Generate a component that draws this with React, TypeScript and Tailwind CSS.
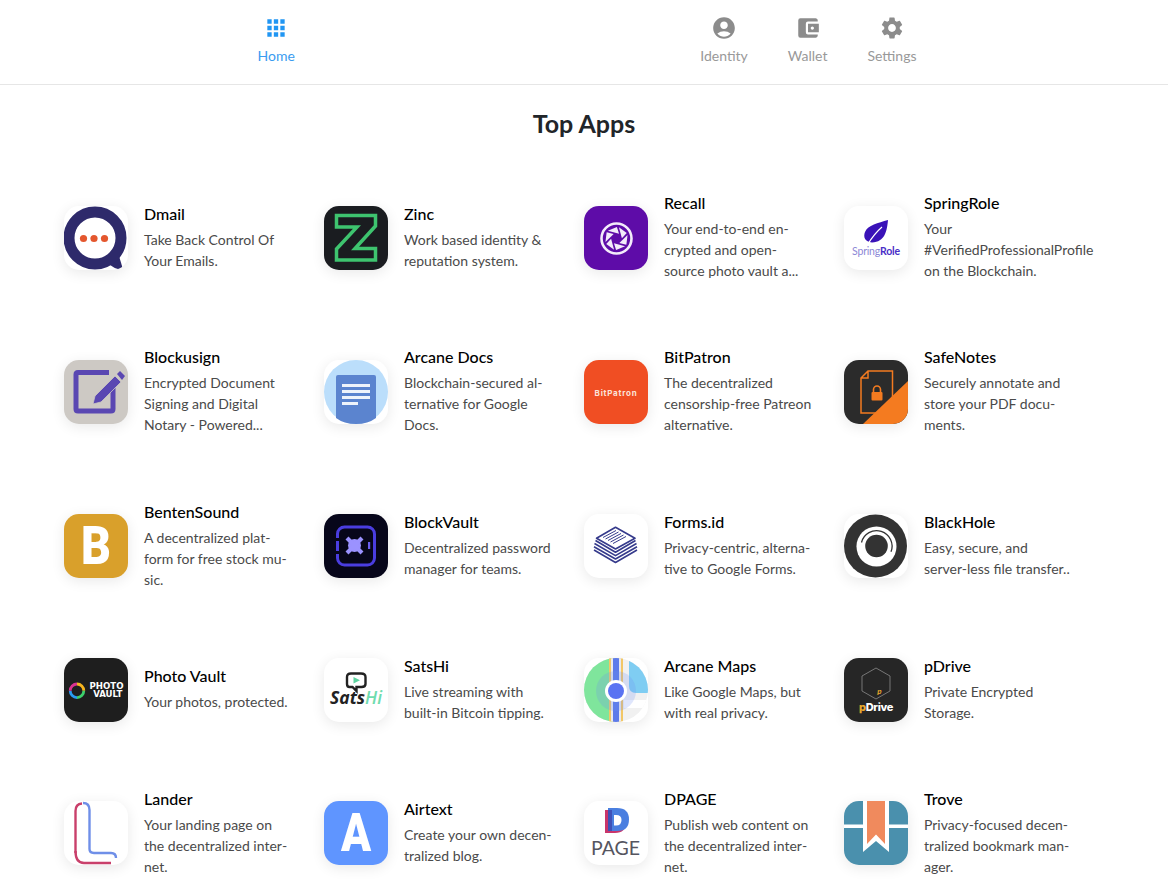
import React from "react";
import { MdApps, MdAccountCircle, MdAccountBalanceWallet, MdSettings } from "react-icons/md";

const S = ({ children, bg = "#ffffff" }: { children: React.ReactNode; bg?: string }) => (
  <div className="w-16 h-16 shrink-0 rounded-[15px] overflow-hidden shadow-[0_3px_14px_rgba(0,0,0,0.09)]" style={{ background: bg }}>
    <svg viewBox="0 0 64 64" width="64" height="64" className="block">{children}</svg>
  </div>
);

const Dmail = () => (
  <S>
    <path d="M48 56 L55 50 L58 60 Q59 64 54 63 Q50 62 46 59 Z" fill="#2e2a6b" />
    <circle cx="31" cy="32" r="26" fill="none" stroke="#2e2a6b" strokeWidth="11" />
    <circle cx="19.5" cy="32.5" r="3.6" fill="#e4572e" />
    <circle cx="30" cy="32.5" r="3.6" fill="#e4572e" />
    <circle cx="40.5" cy="32.5" r="3.6" fill="#e4572e" />
  </S>
);
const Zinc = () => (
  <S bg="#1a1c20">
    <path d="M12.5 9.5H51.5V20L31 42.5H51.5V54H12.5V43L33 21H12.5Z" fill="none" stroke="#3ec46f" strokeWidth="3.5" strokeLinejoin="miter" />
  </S>
);
const pt = (r: number, deg: number) => {
  const a = (deg * Math.PI) / 180;
  return `${(32.5 + r * Math.cos(a)).toFixed(2)} ${(32.5 + r * Math.sin(a)).toFixed(2)}`;
};
const Recall = () => (
  <S bg="#5e0ca8">
    <circle cx="32.5" cy="32.5" r="15" fill="none" stroke="#f3ecfa" strokeWidth="2.6" />
    <g fill="#f3ecfa">
      {[0, 60, 120, 180, 240, 300].map((d) => (
        <path key={d} d={`M${pt(11.6, d - 78)} L${pt(11.6, d - 28)} L${pt(5.4, d - 2)} Z`} />
      ))}
    </g>
  </S>
);
const SpringRole = () => (
  <S>
    <path d="M44 14 C43 25 41 36 28 36.5 C21 36 19 31 21 26 C24 19 34 17 44 14 Z" fill="#3a12b8" />
    <path d="M24 38 Q30 28 38 21" fill="none" stroke="#ffffff" strokeWidth="1.2" />
    <text x="32" y="49" textAnchor="middle" fontFamily="Lato, sans-serif" fontSize="10.5" fill="#8d88d6" letterSpacing="-0.2">
      Spring<tspan fill="#4a2fc7" fontWeight="700">Role</tspan>
    </text>
  </S>
);
const Blockusign = () => (
  <S bg="#cdc9c4">
    <path d="M45 12.5 H14 Q12 12.5 12 14.5 V49 Q12 51 14 51 H47 Q49 51 49 49 V28" fill="none" stroke="#5a47b2" strokeWidth="5" />
    <path d="M29 44 L31 36 L51 16 L57 22 L37 42 Z" fill="#5a47b2" stroke="#cdc9c4" strokeWidth="0.8" />
    <path d="M53 14 L56 11 L61 16 L58 20 Z" fill="#5a47b2" />
  </S>
);
const ArcaneDocs = () => (
  <S>
    <circle cx="32" cy="32" r="32" fill="#bbdefb" />
    <path d="M12 17 Q12 15 14 15 H50 Q52 15 52 17 V58 Q44 64 32 64 Q20 64 12 58 Z" fill="#5b84cf" />
    <g fill="#eef3fb">
      <rect x="18" y="24" width="28" height="3" />
      <rect x="18" y="30" width="28" height="3" />
      <rect x="18" y="36" width="28" height="3" />
      <rect x="18" y="42" width="16" height="3" />
    </g>
  </S>
);
const BitPatron = () => (
  <S bg="#f04e23">
    <text x="32" y="35.5" textAnchor="middle" fontFamily="Inter, sans-serif" fontWeight="700" fontSize="8" letterSpacing="0.75" fill="#fbe3da">BitPatron</text>
  </S>
);
const SafeNotes = () => (
  <S bg="#2b2b2b">
    <path d="M24 11 H48.5 V53 H17 V18 Z M24 11 V18 H17" fill="none" stroke="#f47b20" strokeWidth="1.5" />
    <path d="M64 21 V64 H19 Z" fill="#f47b20" />
    <rect x="27.5" y="32" width="11" height="8.5" rx="1" fill="#f47b20" />
    <path d="M29.5 32 V29.5 A3.5 3.5 0 0 1 36.5 29.5 V32" fill="none" stroke="#f47b20" strokeWidth="1.6" />
  </S>
);
const Benten = () => (
  <S bg="#d9a02b">
    <text x="32" y="50" textAnchor="middle" fontFamily="Roboto, sans-serif" fontWeight="900" fontSize="54" fill="#ffffff" transform="translate(32 0) scale(0.86 1) translate(-32 0)">B</text>
  </S>
);
const BlockVault = () => (
  <S bg="#07061a">
    <rect x="13.5" y="13" width="37" height="38" rx="7" fill="none" stroke="#4a3de0" strokeWidth="3" />
    <rect x="11" y="24" width="5" height="3" fill="#07061a" />
    <rect x="11" y="37" width="5" height="3" fill="#07061a" />
    <rect x="44" y="28" width="2.2" height="7" fill="#6a5ff0" />
    <circle cx="30.5" cy="31.5" r="6.5" fill="#9b92ff" />
    <path d="M23 24 L38 39 M38 24 L23 39" stroke="#9b92ff" strokeWidth="4.2" />
  </S>
);
const Forms = () => (
  <S>
    <g fill="none" stroke="#363b8c" strokeWidth="1.6" strokeLinejoin="round">
      <path d="M10 36 L31.5 48.5 L53 36" />
      <path d="M10 32.7 L31.5 45 L53 32.7" />
      <path d="M10.5 29.5 L31.5 41.6 L52.5 29.5" />
      <path d="M11.5 26.5 L31.5 38.3 L51.5 26.5" />
      <path d="M12.5 24.3 L31.5 13.3 L51 24.3 L31.5 35 Z" fill="#ffffff" />
      <path d="M19 23.5 L32 16.5 M21.5 25 L34.5 18 M24 26.5 L37 19.5 M26.5 28 L39.5 21 M29 29.5 L42 22.5" strokeWidth="1" />
    </g>
  </S>
);
const BlackHole = () => (
  <S>
    <circle cx="31.5" cy="32" r="31.5" fill="#333333" />
    <circle cx="32.5" cy="32.5" r="20" fill="#ffffff" />
    <path d="M17.5 28.5 A15.5 15.5 0 1 1 47 37.8" fill="none" stroke="#333333" strokeWidth="1.3" />
    <circle cx="32.5" cy="32" r="11.3" fill="#333333" />
  </S>
);
const PhotoVault = () => (
  <S bg="#1e1e1e">
    <g fill="none" strokeWidth="2.8">
      <path d="M13 26 A6.8 6.8 0 0 1 19.8 32.8" stroke="#f5b41e" />
      <path d="M19.8 32.8 A6.8 6.8 0 0 1 13 39.6" stroke="#3ccf6b" />
      <path d="M13 39.6 A6.8 6.8 0 0 1 6.2 32.8" stroke="#2a9bf0" />
      <path d="M6.2 32.8 A6.8 6.8 0 0 1 13 26" stroke="#d9328f" />
    </g>
    <text x="59.5" y="30.5" textAnchor="end" fontFamily="'DejaVu Sans', sans-serif" fontWeight="700" fontSize="8.6" fill="#ffffff">PHOTO</text>
    <text x="58.5" y="39" textAnchor="end" fontFamily="'DejaVu Sans', sans-serif" fontWeight="700" fontSize="8.6" fill="#ffffff">VAULT</text>
  </S>
);
const SatsHi = () => (
  <S>
    <path d="M25.5 29 Q23 29 23 26 V19 Q23 15.5 27 15.5 H37 Q41.5 15.5 41.5 19 V26 Q41.5 29 37.5 29 H32.5 V33 L28.5 29 Z" fill="none" stroke="#222222" strokeWidth="2.4" />
    <path d="M29.5 19 L36 22.2 L29.5 25.5 Z" fill="#5ed3a0" />
    <text x="32" y="45.5" textAnchor="middle" fontFamily="'Open Sans', sans-serif" fontStyle="italic" fontWeight="700" fontSize="17.5" fill="#222222">Sats<tspan fill="#6fdcae" fontWeight="600">Hi</tspan></text>
  </S>
);
const ArcaneMaps = () => (
  <S>
    <defs>
      <clipPath id="mapclip"><circle cx="32" cy="32" r="32" /></clipPath>
    </defs>
    <g clipPath="url(#mapclip)">
      <rect width="64" height="64" fill="#f1f1f1" />
      <rect width="32" height="64" fill="#7fe59c" />
      <path d="M37 0 H64 V35 H52 Q45 35 45 28 V0 Z" fill="#7fcdf2" />
      <path d="M40 42 H64 V50 H40 Z" fill="#ffffff" />
      <rect x="25" y="0" width="14" height="64" fill="#f2c766" />
      <rect x="27" y="0" width="10" height="64" fill="#e9e9ee" />
      <rect x="29" y="0" width="6" height="64" fill="#5d7bea" />
      <circle cx="32" cy="33" r="20" fill="#6f8ff0" opacity="0.22" />
      <circle cx="32" cy="33" r="11" fill="#ffffff" />
      <circle cx="32" cy="33" r="8" fill="#5a73f2" />
    </g>
  </S>
);
const PDrive = () => (
  <S bg="#262626">
    <path d="M32 10 L46 18 V33 L32 41 L18 33 V18 Z" fill="none" stroke="#8b8b8b" strokeWidth="0.8" />
    <text x="35.5" y="36" textAnchor="middle" fontFamily="Lato, sans-serif" fontStyle="italic" fontWeight="700" fontSize="8" fill="#e8a92c">p</text>
    <text x="32" y="52.5" textAnchor="middle" fontFamily="Inter, sans-serif" fontWeight="800" fontSize="11" letterSpacing="-0.3" fill="#ffffff"><tspan fill="#e8a92c">p</tspan>Drive</text>
  </S>
);
const Lander = () => (
  <S>
    <path d="M11.5 52 V10 Q11.5 3 18 2.5" fill="none" stroke="#c9406b" strokeWidth="2.4" />
    <path d="M11.5 50 Q11.5 62 20 62 H47" fill="none" stroke="#c9406b" strokeWidth="2.4" />
    <path d="M19 2 Q25.5 2 25.5 9 V48 Q25.5 52 30 52 H47 Q52 52 52 57" fill="none" stroke="#6f8fe8" strokeWidth="2.4" />
  </S>
);
const Airtext = () => (
  <S bg="#5f95ff">
    <text x="32" y="50" textAnchor="middle" fontFamily="Roboto, sans-serif" fontWeight="900" fontSize="54" fill="#ffffff" transform="translate(32 0) scale(0.82 1) translate(-32 0)">A</text>
  </S>
);
const DPage = () => (
  <S>
    <path d="M21 9 H31 Q42 9 42 20.5 Q42 32 31 32 H21 Z" fill="#c9356b" />
    <path d="M24 7 H33 Q45 7 45 18.5 Q45 30 33 30 H24 Z" fill="#4a7fe0" />
    <path d="M24 9 H28 V30 H24 Z" fill="#3f52b8" />
    <path d="M30 14 H32 Q37.5 14 37.5 19 Q37.5 24.5 32 24.5 H30 Z" fill="#ffffff" />
    <text x="31.5" y="53.5" textAnchor="middle" fontFamily="Lato, sans-serif" fontWeight="400" fontSize="19.5" fill="#55555f">PAGE</text>
  </S>
);
const Trove = () => (
  <S bg="#4a90ad">
    <rect x="0" y="23.5" width="64" height="3.5" fill="#ffffff" />
    <path d="M19 0 H45 V51 L32 40 L19 51 Z" fill="#ffffff" />
    <path d="M23 0 H41 V43 L32 33.5 L23 43 Z" fill="#f08a5d" />
  </S>
);

const H = "\u00AD";
const rows: { name: string; desc: string; Icon: React.FC }[] = [
  { name: "Dmail", desc: "Take Back Control Of Your Emails.", Icon: Dmail },
  { name: "Zinc", desc: "Work based identity & reputation system.", Icon: Zinc },
  { name: "Recall", desc: `Your end-to-end en${H}crypted and open-source photo vault a...`, Icon: Recall },
  { name: "SpringRole", desc: "Your #VerifiedProfessionalProfile on the Blockchain.", Icon: SpringRole },
  { name: "Blockusign", desc: "Encrypted Document Signing and Digital Notary - Powered...", Icon: Blockusign },
  { name: "Arcane Docs", desc: `Blockchain-secured al${H}ternative for Google Docs.`, Icon: ArcaneDocs },
  { name: "BitPatron", desc: "The decentralized censorship-free Patreon alternative.", Icon: BitPatron },
  { name: "SafeNotes", desc: `Securely annotate and store your PDF docu${H}ments.`, Icon: SafeNotes },
  { name: "BentenSound", desc: `A decentralized plat${H}form for free stock mu${H}sic.`, Icon: Benten },
  { name: "BlockVault", desc: "Decentralized password manager for teams.", Icon: BlockVault },
  { name: "Forms.id", desc: `Privacy-centric, alterna${H}tive to Google Forms.`, Icon: Forms },
  { name: "BlackHole", desc: "Easy, secure, and server-less file transfer..", Icon: BlackHole },
  { name: "Photo Vault", desc: "Your photos, protected.", Icon: PhotoVault },
  { name: "SatsHi", desc: "Live streaming with built-in Bitcoin tipping.", Icon: SatsHi },
  { name: "Arcane Maps", desc: "Like Google Maps, but with real privacy.", Icon: ArcaneMaps },
  { name: "pDrive", desc: "Private Encrypted Storage.", Icon: PDrive },
  { name: "Lander", desc: `Your landing page on the decentralized inter${H}net.`, Icon: Lander },
  { name: "Airtext", desc: `Create your own decen${H}tralized blog.`, Icon: Airtext },
  { name: "DPAGE", desc: `Publish web content on the decentralized inter${H}net.`, Icon: DPage },
  { name: "Trove", desc: `Privacy-focused decen${H}tralized bookmark man${H}ager.`, Icon: Trove },
];

const NavItem = ({ icon, label, active }: { icon: React.ReactNode; label: string; active?: boolean }) => (
  <div className={`flex flex-col items-center ${active ? "text-[#2196f3]" : "text-[#8c8c8c]"}`}>
    <div className="h-[26px] w-[26px]">{icon}</div>
    <span className={`mt-1 text-sm leading-[21px] ${active ? "text-[#3a9bf0]" : "text-[#999999]"}`}>{label}</span>
  </div>
);

export default function App() {
  return (
    <div className="h-[886px] overflow-hidden bg-white font-['Lato',sans-serif]">
      <header className="h-[85px] border-b border-[#e6e6e6] pt-[15px]">
        <nav className="ml-[257.5px] flex w-[659px] justify-between">
          <NavItem active label="Home" icon={<MdApps size={26} />} />
          <div className="flex gap-10">
            <NavItem label="Identity" icon={<MdAccountCircle size={26} />} />
            <NavItem label="Wallet" icon={<MdAccountBalanceWallet size={26} />} />
            <NavItem label="Settings" icon={<MdSettings size={26} />} />
          </div>
        </nav>
      </header>
      <h1 className="mt-[21px] text-center text-[25px] font-bold leading-[34px] text-[#212529]">Top Apps</h1>
      <main className="mt-[54.3px] grid grid-cols-[repeat(4,260px)] items-center gap-y-[67.15px] px-16">
        {rows.map(({ name, desc, Icon }) => (
          <div key={name} className="flex items-center">
            <Icon />
            <div className="ml-4 w-[150px]">
              <div className="mb-1.5 text-base font-medium leading-[18px] text-black">{name}</div>
              <p className="text-sm leading-[21px] text-[#4a4a4a]">{desc}</p>
            </div>
          </div>
        ))}
      </main>
    </div>
  );
}
